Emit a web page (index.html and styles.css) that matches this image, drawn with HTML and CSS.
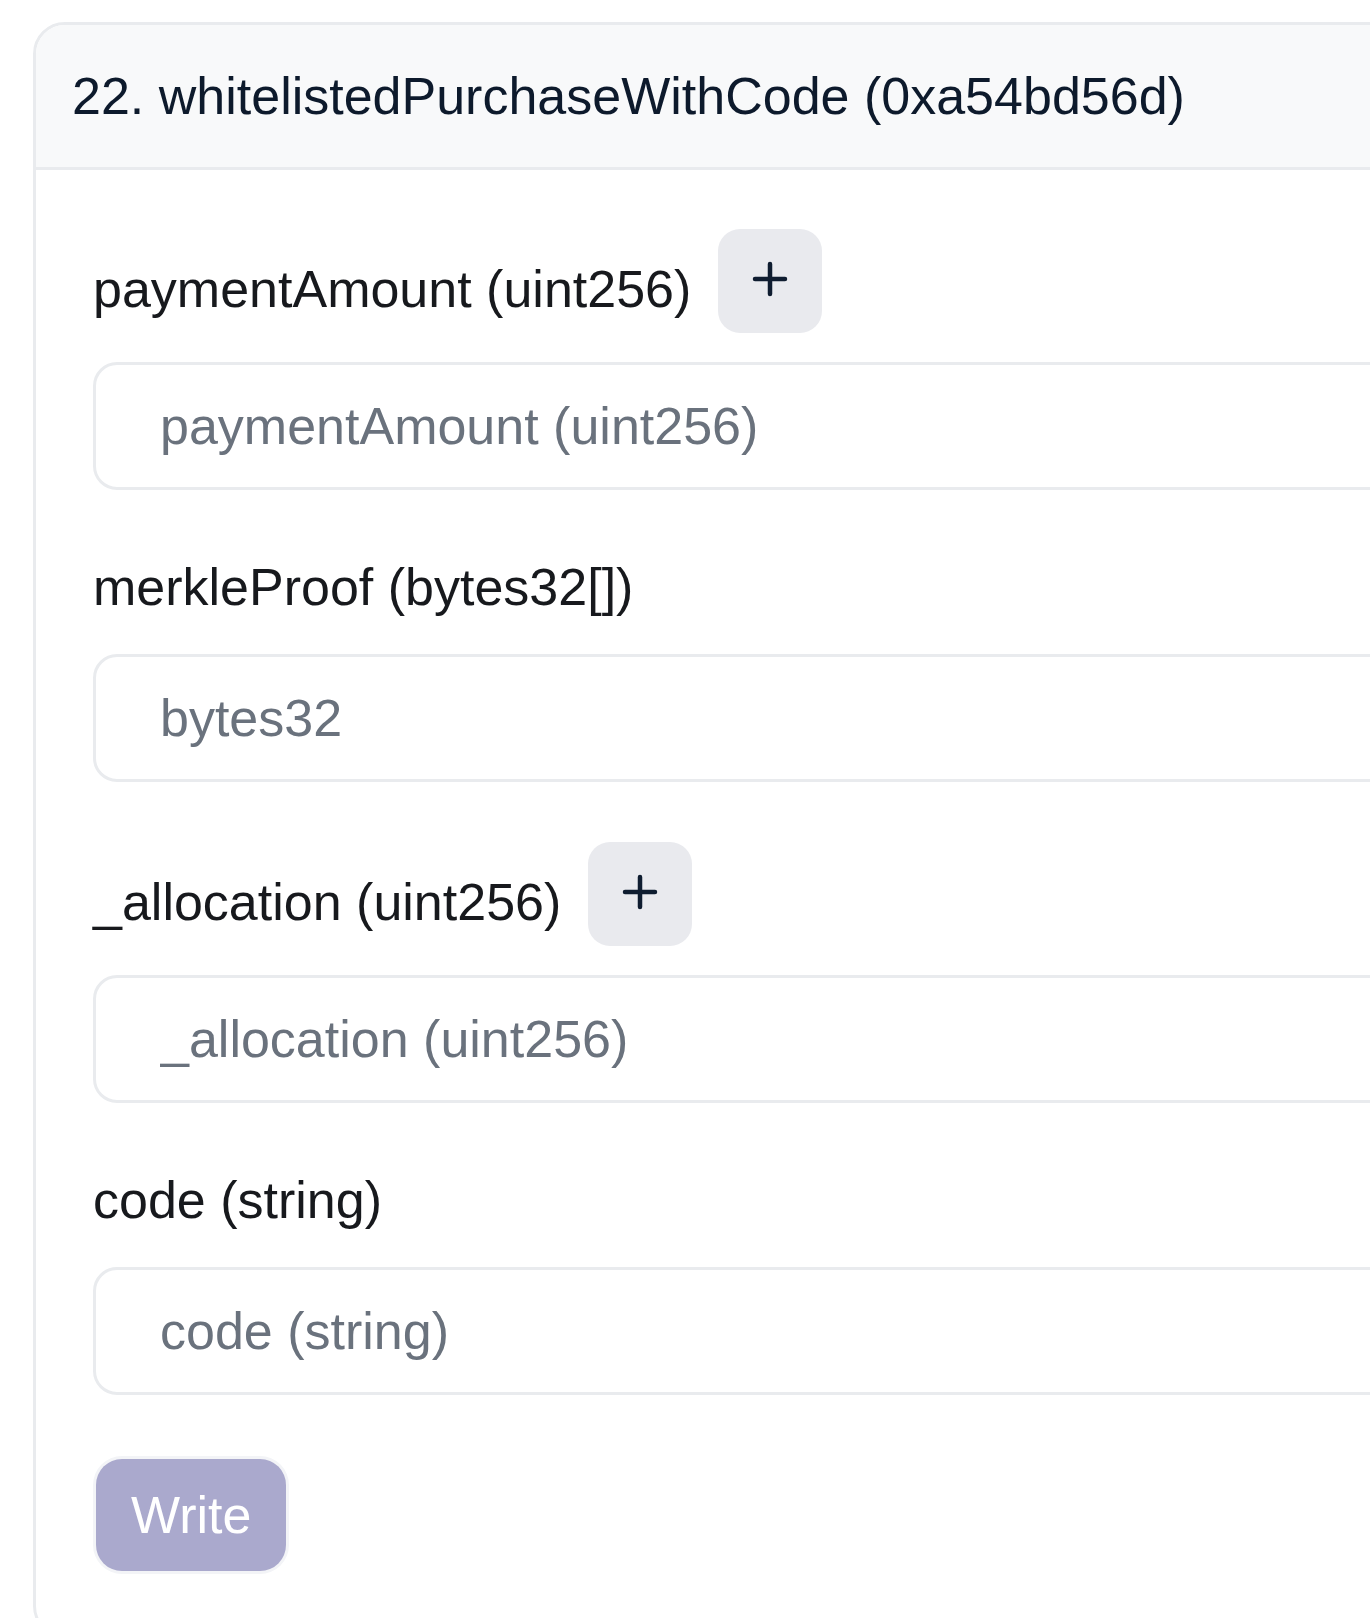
FILE: index.html
```html
<!DOCTYPE html>
<html lang="en">
<head>
<meta charset="utf-8">
<title>whitelistedPurchaseWithCode</title>
<link rel="stylesheet" href="styles.css">
</head>
<body>
  <section class="card">
    <header class="card-header">22. whitelistedPurchaseWithCode (0xa54bd56d)</header>
    <div class="card-body">
      <div class="field">
        <div class="label-row">
          <label class="label with-btn">paymentAmount (uint256)</label>
          <button class="add-btn" type="button" aria-label="multiply">
            <svg width="40" height="40" viewBox="0 0 40 40"><path d="M20 5V35M5 20H35" stroke="#0f1d30" stroke-width="4.5" stroke-linecap="round" fill="none"/></svg>
          </button>
        </div>
        <input class="input" type="text" placeholder="paymentAmount (uint256)">
      </div>
      <div class="field">
        <div class="label-row">
          <label class="label">merkleProof (bytes32[])</label>
        </div>
        <input class="input" type="text" placeholder="bytes32">
      </div>
      <div class="field">
        <div class="label-row">
          <label class="label with-btn">_allocation (uint256)</label>
          <button class="add-btn" type="button" aria-label="multiply">
            <svg width="40" height="40" viewBox="0 0 40 40"><path d="M20 5V35M5 20H35" stroke="#0f1d30" stroke-width="4.5" stroke-linecap="round" fill="none"/></svg>
          </button>
        </div>
        <input class="input" type="text" placeholder="_allocation (uint256)">
      </div>
      <div class="field">
        <div class="label-row">
          <label class="label">code (string)</label>
        </div>
        <input class="input" type="text" placeholder="code (string)">
      </div>
      <div class="actions">
        <button class="write-btn" type="button">Write</button>
      </div>
    </div>
  </section>
</body>
</html>
```

FILE: styles.css
```css
html, body {
  margin: 0;
  padding: 0;
  background: #ffffff;
  overflow: hidden;
}

body {
  font-family: "Liberation Sans", Arial, Helvetica, sans-serif;
  font-size: 52px;
  line-height: 1.5;
  padding: 22px 0 0 33px;
}

.card {
  width: 1500px;
  border: 3px solid #e9ebee;
  border-radius: 32px;
  background: #ffffff;
  overflow: hidden;
}

.card-header {
  background: #f8f9fa;
  border-bottom: 3px solid #e9ebee;
  padding: 32px 36px 32px 36px;
  color: #0d1a2c;
  white-space: nowrap;
}

.card-body {
  padding: 59px 57px 64px 57px;
  display: flex;
  flex-direction: column;
  gap: 60px;
}

.field {
  display: flex;
  flex-direction: column;
  gap: 29px;
}

.label-row {
  display: flex;
  align-items: center;
  gap: 27px;
}

.label {
  color: #17191d;
  line-height: 75px;
  white-space: nowrap;
}

.label.with-btn {
  padding-top: 16px;
}

.add-btn {
  width: 104px;
  height: 104px;
  border: none;
  border-radius: 22px;
  background: #e9eaee;
  display: flex;
  align-items: center;
  justify-content: center;
  padding: 0 0 4px 0;
  cursor: pointer;
}

.input {
  box-sizing: border-box;
  width: 100%;
  height: 128px;
  border: 3px solid #e9ebee;
  border-radius: 24px;
  padding: 0 64px;
  font-family: inherit;
  font-size: 52px;
  color: #17191d;
  background: #ffffff;
  outline: none;
}

.input::placeholder {
  color: #6a727d;
}

.actions {
  display: flex;
  padding-top: 4px;
}

.write-btn {
  font-family: inherit;
  font-size: 52px;
  line-height: 1.5;
  color: #ffffff;
  background: #aaa9cd;
  border: none;
  border-radius: 26px;
  padding: 17px 35px;
  margin-left: 3px;
  box-shadow: 0 0 0 3px #f3f4f7;
  cursor: not-allowed;
}
```
